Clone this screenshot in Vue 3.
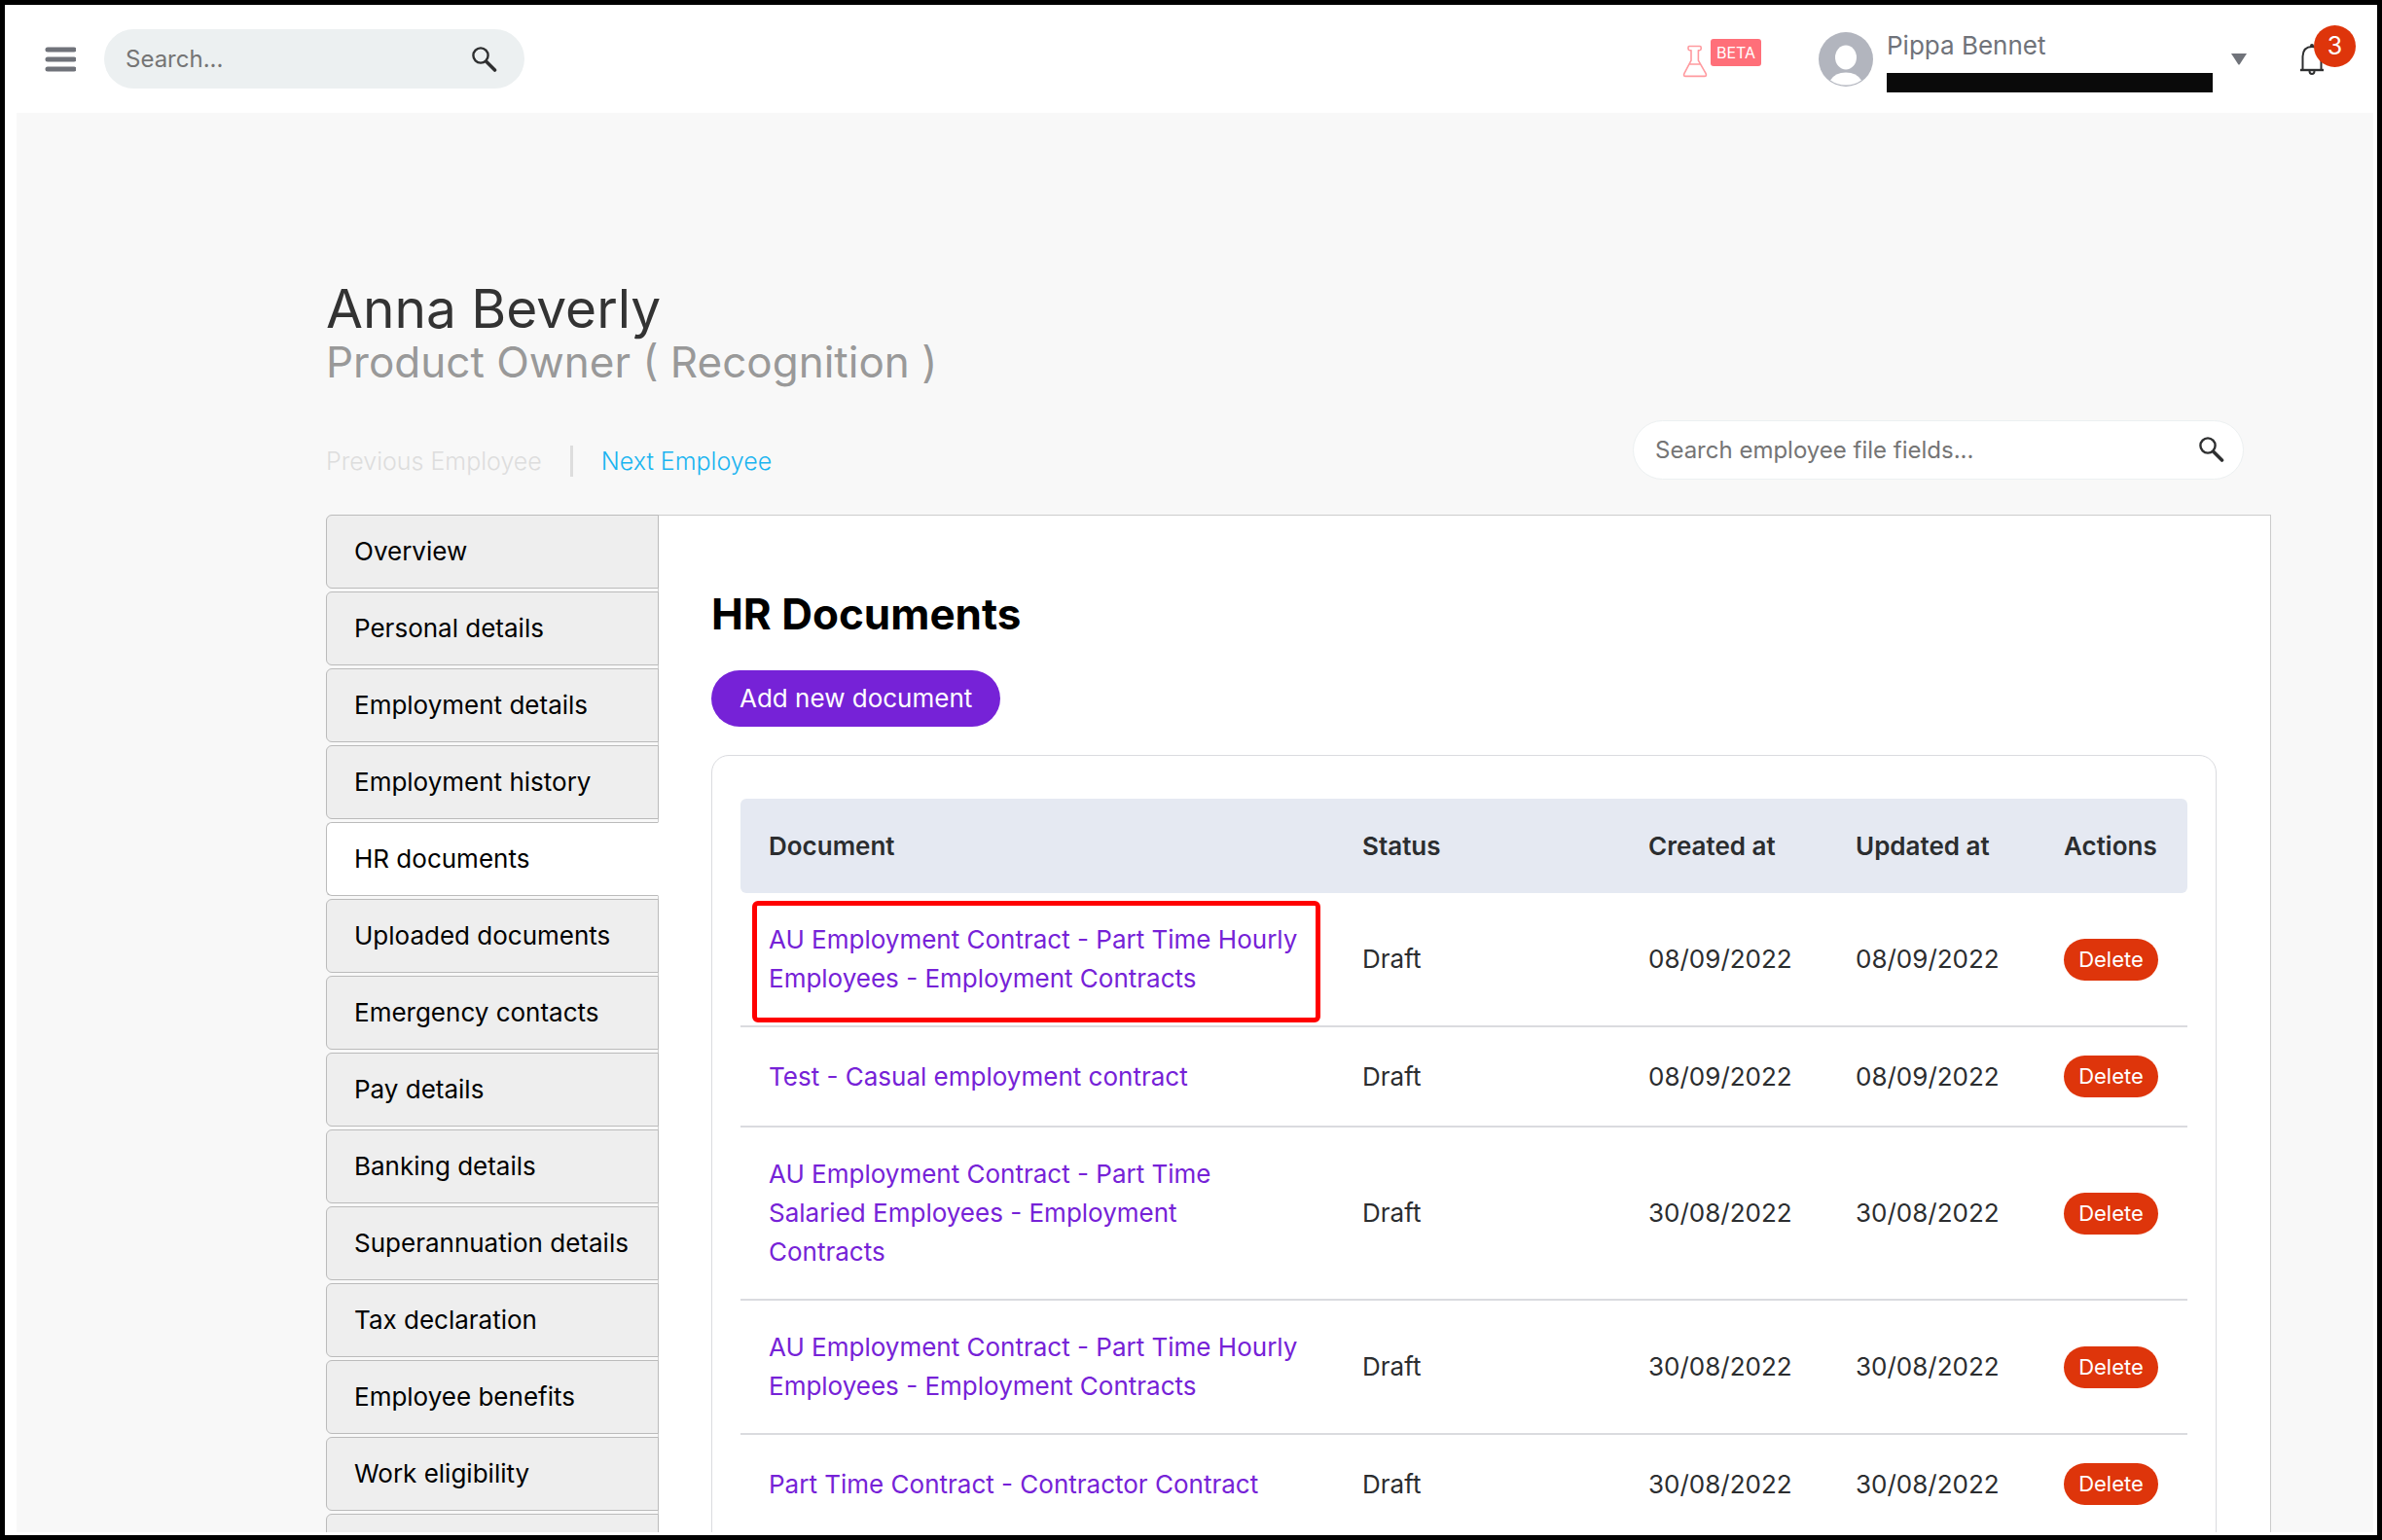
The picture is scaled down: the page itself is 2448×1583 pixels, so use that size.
<script setup>
import { ref } from 'vue'

const siteSearch = ref('')
const fieldSearch = ref('')

const sections = [
  'Overview',
  'Personal details',
  'Employment details',
  'Employment history',
  'HR documents',
  'Uploaded documents',
  'Emergency contacts',
  'Pay details',
  'Banking details',
  'Superannuation details',
  'Tax declaration',
  'Employee benefits',
  'Work eligibility',
]
const activeSection = ref('HR documents')

const documents = [
  { id: 1, name: 'AU Employment Contract - Part Time Hourly Employees - Employment Contracts', status: 'Draft', created: '08/09/2022', updated: '08/09/2022', highlighted: true },
  { id: 2, name: 'Test - Casual employment contract', status: 'Draft', created: '08/09/2022', updated: '08/09/2022' },
  { id: 3, name: 'AU Employment Contract - Part Time Salaried Employees - Employment\nContracts', status: 'Draft', created: '30/08/2022', updated: '30/08/2022' },
  { id: 4, name: 'AU Employment Contract - Part Time Hourly Employees - Employment Contracts', status: 'Draft', created: '30/08/2022', updated: '30/08/2022' },
  { id: 5, name: 'Part Time Contract - Contractor Contract', status: 'Draft', created: '30/08/2022', updated: '30/08/2022' },
]
</script>

<template>
  <div class="frame">
    <header class="topbar">
      <button class="icon-button" type="button" aria-label="Menu">
        <svg width="32" height="26" viewBox="0 0 32 26" stroke="#70737a" stroke-width="5" stroke-linecap="round">
          <path d="M3 3h27M3 13h27M3 23h27" />
        </svg>
      </button>

      <form class="search search-site" @submit.prevent>
        <input v-model="siteSearch" type="text" placeholder="Search..." aria-label="Search" />
        <button class="icon-button" type="submit" aria-label="Search">
          <svg width="26" height="26" viewBox="0 0 26 26" fill="none" stroke="#2e2f30">
            <circle cx="9" cy="9" r="7.6" stroke-width="2.4" />
            <path d="M15 15.5l8.5 8.5" stroke-width="3.6" stroke-linecap="round" />
          </svg>
        </button>
      </form>

      <div class="beta">
        <svg width="26" height="34" viewBox="0 0 26 34" fill="none" stroke="#ff9a9f" stroke-width="1.6" stroke-linejoin="round">
          <path d="M7 1.5h11q1.2 0 1.2 1.4v1.2q0 1.6-1.4 1.6h-1.4v10.5l7.6 13.2q1.4 3-1.4 3H3.4q-2.8 0-1.4-3L9 16.2V5.7H7.4Q6 5.7 6 4.1V2.9Q6 1.5 7 1.5zM7 20h12" />
        </svg>
        <span class="beta-tag">BETA</span>
      </div>

      <svg class="avatar" width="56" height="56" viewBox="0 0 56 56">
        <circle cx="28" cy="28" r="28" fill="#b2b5be" />
        <ellipse cx="28" cy="26" rx="11" ry="12.5" fill="#fff" />
        <path d="M12 49.5Q17 41.5 28 41.5T44 49.5Q37 54.5 28 54.5T12 49.5z" fill="#fff" />
      </svg>

      <div class="account">
        <span class="account-name">Pippa Bennet</span>
        <span class="account-redacted"></span>
      </div>

      <button class="icon-button" type="button" aria-label="Account menu">
        <svg width="16" height="12" viewBox="0 0 16 12"><path d="M0 0h16L8.500 11.500h-1z" fill="#70737a" /></svg>
      </button>

      <button class="icon-button bell" type="button" aria-label="Notifications, 3 unread">
        <svg width="24" height="32" viewBox="0 0 24 32" fill="none" stroke="#2e2f30" stroke-width="2">
          <path d="M2.5 26.5V13Q3 3 12 3t9.5 10v13.5" />
          <path d="M0 27h24" stroke-width="2.4" />
          <path d="M9.5 28q0 3 2.5 3t2.5-3" />
          <circle cx="12" cy="2" r="1" fill="#2e2f30" />
        </svg>
        <span class="bell-count">3</span>
      </button>
    </header>

    <main class="page">
      <h1>Anna Beverly</h1>
      <p class="role">Product Owner ( Recognition )</p>

      <div class="page-tools">
        <nav class="pager" aria-label="Employees">
          <span class="pager-off">Previous Employee</span>
          <span class="pager-divider"></span>
          <a href="#next">Next Employee</a>
        </nav>
        <form class="search search-fields" @submit.prevent>
          <input v-model="fieldSearch" type="text" placeholder="Search employee file fields..." aria-label="Search employee file fields" />
          <button class="icon-button" type="submit" aria-label="Search employee file fields">
            <svg width="26" height="26" viewBox="0 0 26 26" fill="none" stroke="#2e2f30">
              <circle cx="9" cy="9" r="7.6" stroke-width="2.4" />
              <path d="M15 15.5l8.5 8.5" stroke-width="3.6" stroke-linecap="round" />
            </svg>
          </button>
        </form>
      </div>

      <div class="employee-file">
        <nav class="sections" aria-label="Employee file">
          <a
            v-for="section in sections"
            :key="section"
            class="section-tab"
            :href="'#' + section.toLowerCase().replaceAll(' ', '-')"
            :class="{ active: section === activeSection }"
            @click.prevent="activeSection = section"
          >{{ section }}</a>
          <span class="section-tab" aria-hidden="true"></span>
        </nav>

        <section class="panel">
          <h2>HR Documents</h2>
          <button class="add-button" type="button">Add new document</button>

          <div class="card">
            <table>
              <colgroup>
                <col />
                <col class="col-status" />
                <col class="col-created" />
                <col class="col-updated" />
                <col class="col-actions" />
              </colgroup>
              <thead>
                <tr>
                  <th>Document</th>
                  <th>Status</th>
                  <th>Created at</th>
                  <th>Updated at</th>
                  <th>Actions</th>
                </tr>
              </thead>
              <tbody>
                <tr v-for="doc in documents" :key="doc.id">
                  <td :class="{ highlighted: doc.highlighted }"><a href="#document">{{ doc.name }}</a></td>
                  <td>{{ doc.status }}</td>
                  <td>{{ doc.created }}</td>
                  <td>{{ doc.updated }}</td>
                  <td class="cell-action"><button class="delete-button" type="button">Delete</button></td>
                </tr>
              </tbody>
            </table>
          </div>
        </section>
      </div>
    </main>
  </div>
</template>

<style>
body {
  margin: 0;
}
</style>

<style scoped>
.frame {
  box-sizing: border-box;
  height: 100vh;
  overflow: hidden;
  display: flex;
  flex-direction: column;
  border: 5px solid #000;
  background: #fff;
  color: #2b2d2f;
  font: 400 26px/40px Inter, "Liberation Sans", sans-serif;
}
.frame *,
.frame *::after {
  box-sizing: border-box;
}
button,
input {
  font: inherit;
  color: inherit;
  border: 0;
  padding: 0;
  background: none;
}
a {
  text-decoration: none;
}
svg {
  display: block;
}
button {
  cursor: pointer;
}
.icon-button {
  flex: none;
}

.topbar {
  flex: none;
  display: flex;
  align-items: center;
  height: 111px;
  padding: 0 55px 0 41px;
}
.search {
  display: flex;
  align-items: center;
  height: 61px;
  border-radius: 31px;
}
.search input {
  flex: 1;
  min-width: 0;
  height: 100%;
  outline: none;
  font-size: 24px;
}
.search input::placeholder {
  color: #757575;
  opacity: 1;
}
.search-site {
  width: 432px;
  margin-left: 29px;
  padding: 0 28px 0 22px;
  background: #ecf0f1;
}
.beta {
  display: flex;
  align-items: flex-start;
  gap: 3px;
  margin-left: auto;
  padding-bottom: 2px;
}
.beta svg {
  margin-top: 6px;
}
.beta-tag {
  padding: 0 6px;
  border-radius: 3px;
  background: #ff6f79;
  color: #fff;
  font-size: 16px;
  line-height: 28px;
}
.avatar {
  flex: none;
  margin-left: 59px;
}
.account {
  display: flex;
  flex-direction: column;
  gap: 8px;
  width: 335px;
  margin: 0 19px 0 14px;
  color: #70737a;
}
.account-redacted {
  height: 20px;
  background: #0a0a0a;
}
.bell {
  position: relative;
  margin-left: 55px;
}
.bell-count {
  position: absolute;
  top: -19px;
  left: 14px;
  width: 43px;
  border-radius: 50%;
  background: #de350b;
  color: #fff;
  font-size: 25px;
  line-height: 43px;
}

.page {
  flex: 1;
  min-height: 0;
  overflow: hidden;
  margin: 0 4px 3px 12px;
  padding: 169px 105px 0 318px;
  background: #f8f8f8;
}
h1,
h2,
p {
  margin: 0;
}
h1 {
  color: #333;
  font-size: 55px;
  font-weight: 400;
  line-height: 64px;
}
.role {
  color: #999;
  font-size: 44px;
  line-height: 46px;
}
.page-tools {
  display: flex;
  align-items: center;
  justify-content: space-between;
  margin: 35px 28px 35px 0;
}
.pager {
  display: flex;
  align-items: center;
  padding-top: 24px;
  font-size: 25px;
  font-weight: 300;
}
.pager-off {
  color: #ddd;
}
.pager-divider {
  width: 3px;
  height: 32px;
  margin: 0 29px;
  background: #ddd;
}
.pager a {
  color: #1ab4f0;
}
.search-fields {
  width: 628px;
  padding: 0 19px 0 22px;
  border: 1px solid #ecf0f1;
  background: #fff;
}

.employee-file {
  display: flex;
}
.sections {
  flex: none;
  display: flex;
  flex-direction: column;
  gap: 3px;
  width: 342px;
  margin-right: -1px;
}
.section-tab {
  position: relative;
  height: 76px;
  padding-left: 28px;
  border: 1px solid #bbb;
  border-radius: 6px 0 0 6px;
  background: #eee;
  color: #000;
  line-height: 74px;
}
.section-tab.active {
  border-right-color: #fff;
  background: #fff;
}
.panel {
  flex: 1;
  min-width: 0;
  padding: 77px 55px 60px 54px;
  border: 1px solid #ccc;
  background: #fff;
}
h2 {
  color: #000;
  font-size: 44px;
  font-weight: 700;
  line-height: 48px;
}
.add-button {
  height: 58px;
  margin: 34px 0 29px;
  padding: 0 29px;
  border-radius: 29px;
  background: #7622d7;
  color: #fff;
  display: block;
}
.card {
  padding: 44px 29px;
  border: 1px solid #dadbdf;
  border-radius: 18px;
}
table {
  width: 100%;
  table-layout: fixed;
  border-spacing: 0;
}
.col-status {
  width: 294px;
}
.col-created {
  width: 213px;
}
.col-updated {
  width: 214px;
}
.col-actions {
  width: 156px;
}
th,
td {
  padding: 28px 0 28px 29px;
  text-align: left;
  vertical-align: middle;
}
th {
  height: 97px;
  background: #e5e9f2;
  font-weight: 600;
}
th:first-child {
  border-radius: 6px 0 0 6px;
}
th:last-child {
  border-radius: 0 6px 6px 0;
}
td {
  border-bottom: 2px solid #dadbdf;
}
td:first-child {
  padding-right: 28px;
  white-space: pre-line;
}
td a {
  color: #7622d7;
}
td.cell-action {
  padding-top: 29px;
  padding-bottom: 29px;
}
.highlighted {
  position: relative;
}
.highlighted::after {
  content: "";
  position: absolute;
  inset: 8px 14px 3px 12px;
  border: 5px solid #f00;
  border-radius: 6px;
  pointer-events: none;
}
.delete-button {
  display: block;
  width: 97px;
  height: 43px;
  border-radius: 22px;
  background: #de350b;
  color: #fff;
  font-size: 22px;
  line-height: 43px;
}
</style>
